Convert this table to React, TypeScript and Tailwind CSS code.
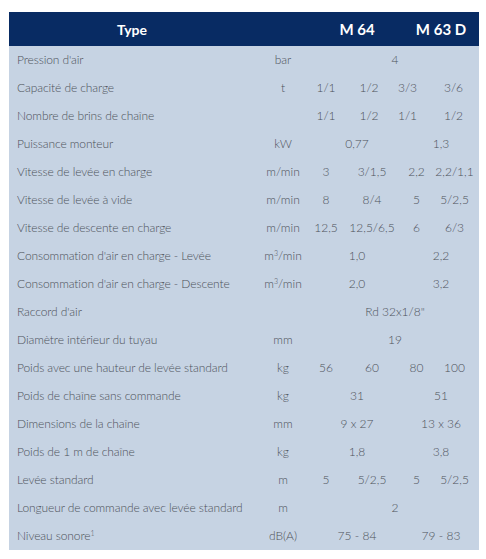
import { ReactNode } from 'react';

type Cell = { v: ReactNode; span?: number; shift?: string };
type Row = { label: ReactNode; unit: ReactNode; cells: Cell[] };

const m3 = (
    <>
        m<sup className="text-[7px] relative -top-[3px]">3</sup>/min
    </>
);

const rows: Row[] = [
    { label: "Pression d'air", unit: 'bar', cells: [{ v: '4', span: 4 }] },
    {
        label: 'Capacité de charge',
        unit: 't',
        cells: [
            { v: '1/1' },
            { v: '1/2', shift: 'translate-x-[-3px]' },
            { v: '3/3', shift: 'translate-x-[-9px]' },
            { v: '3/6', shift: 'translate-x-[-1px]' },
        ],
    },
    {
        label: 'Nombre de brins de chaîne',
        unit: '',
        cells: [
            { v: '1/1' },
            { v: '1/2', shift: 'translate-x-[-3px]' },
            { v: '1/1', shift: 'translate-x-[-9px]' },
            { v: '1/2', shift: 'translate-x-[-1px]' },
        ],
    },
    { label: 'Puissance monteur', unit: 'kW', cells: [{ v: '0,77', span: 2 }, { v: '1,3', span: 2 }] },
    {
        label: 'Vitesse de levée en charge',
        unit: 'm/min',
        cells: [{ v: '3' }, { v: '3/1,5' }, { v: '2,2' }, { v: '2,2/1,1' }],
    },
    {
        label: 'Vitesse de levée à vide',
        unit: 'm/min',
        cells: [{ v: '8' }, { v: '8/4' }, { v: '5' }, { v: '5/2,5' }],
    },
    {
        label: 'Vitesse de descente en charge',
        unit: 'm/min',
        cells: [{ v: '12,5' }, { v: '12,5/6,5' }, { v: '6' }, { v: '6/3' }],
    },
    {
        label: "Consommation d'air en charge - Levée",
        unit: m3,
        cells: [{ v: '1,0', span: 2 }, { v: '2,2', span: 2 }],
    },
    {
        label: "Consommation d'air en charge - Descente",
        unit: m3,
        cells: [{ v: '2,0', span: 2 }, { v: '3,2', span: 2 }],
    },
    { label: "Raccord d'air", unit: '', cells: [{ v: 'Rd 32x1/8"', span: 4 }] },
    { label: 'Diamètre intérieur du tuyau', unit: 'mm', cells: [{ v: '19', span: 4 }] },
    {
        label: 'Poids avec une hauteur de levée standard',
        unit: 'kg',
        cells: [{ v: '56' }, { v: '60' }, { v: '80' }, { v: '100' }],
    },
    { label: 'Poids de chaîne sans commande', unit: 'kg', cells: [{ v: '31', span: 2 }, { v: '51', span: 2 }] },
    {
        label: 'Dimensions de la chaîne',
        unit: 'mm',
        cells: [{ v: '9 x 27', span: 2 }, { v: '13 x 36', span: 2 }],
    },
    { label: 'Poids de 1 m de chaîne', unit: 'kg', cells: [{ v: '1,8', span: 2 }, { v: '3,8', span: 2 }] },
    {
        label: 'Levée standard',
        unit: 'm',
        cells: [{ v: '5' }, { v: '5/2,5' }, { v: '5' }, { v: '5/2,5' }],
    },
    { label: 'Longueur de commande avec levée standard', unit: 'm', cells: [{ v: '2', span: 4 }] },
    {
        label: (
            <>
                Niveau sonore<sup className="text-[7px] relative -top-[3px]">1</sup>
            </>
        ),
        unit: 'dB(A)',
        cells: [{ v: '75 - 84', span: 2 }, { v: '79 - 83', span: 2 }],
    },
];

const spanClass: Record<number, string> = {
    1: 'col-span-1',
    2: 'col-span-2',
    4: 'col-span-4',
};

export default function App() {
    return (
        <div
            className="w-[486px] h-[559px] bg-white pt-[12px] pl-[9px]"
            style={{ fontFamily: 'Lato, "Open Sans", sans-serif' }}
        >
            <div className="w-[470px] grid grid-cols-[246px_56px_30px_62px_27px_49px] bg-[#c6d3e3] text-[12px] text-[#4d525a] font-light">
                {/* header */}
                <div className="h-[34px] bg-[#082b63] text-white font-bold text-[14px] flex items-center justify-center">
                    Type
                </div>
                <div className="h-[34px] bg-[#082b63]" />
                <div className="col-span-2 h-[34px] bg-[#082b63] text-white font-bold text-[15px] flex items-center justify-center">
                    M 64
                </div>
                <div className="col-span-2 h-[34px] bg-[#082b63] text-white font-bold text-[15px] flex items-center justify-center">
                    M 63 D
                </div>

                {rows.map((r, i) => (
                    <div key={i} className="contents">
                        <div className="h-[28px] flex items-center pl-[8px] whitespace-nowrap tracking-[-0.1px]">{r.label}</div>
                        <div className="h-[28px] flex items-center justify-center whitespace-nowrap">{r.unit}</div>
                        {r.cells.map((c, j) => (
                            <div
                                key={j}
                                className={`h-[28px] flex items-center justify-center whitespace-nowrap ${spanClass[c.span ?? 1]}`}
                            >
                                <span className={c.shift ?? ''}>{c.v}</span>
                            </div>
                        ))}
                    </div>
                ))}
            </div>
        </div>
    );
}
